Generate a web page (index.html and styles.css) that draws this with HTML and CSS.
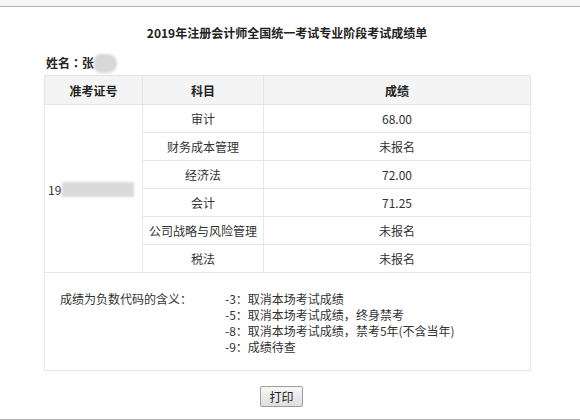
FILE: index.html
```html
<!DOCTYPE html>
<html lang="zh-CN">
<head>
<meta charset="utf-8">
<title>成绩单</title>
<link rel="stylesheet" href="styles.css">
</head>
<body>
<div class="topbar"></div>
<div class="page">
  <h1 class="title">2019年注册会计师全国统一考试专业阶段考试成绩单</h1>
  <div class="name">姓名<span class="punct">：</span>张<span class="blur-name"></span></div>
  <table class="scores">
    <colgroup>
      <col class="c1"><col class="c2"><col class="c3">
    </colgroup>
    <thead>
      <tr><th>准考证号</th><th>科目</th><th>成绩</th></tr>
    </thead>
    <tbody>
      <tr>
        <td rowspan="6" class="id"><span class="id-text">19</span><span class="blur-id"></span></td>
        <td>审计</td><td>68.00</td>
      </tr>
      <tr><td>财务成本管理</td><td>未报名</td></tr>
      <tr><td>经济法</td><td>72.00</td></tr>
      <tr><td>会计</td><td>71.25</td></tr>
      <tr><td>公司战略与风险管理</td><td>未报名</td></tr>
      <tr><td>税法</td><td>未报名</td></tr>
      <tr>
        <td colspan="3" class="notes">
          <div class="notes-inner">
            <div class="notes-label">成绩为负数代码的含义<span class="punct">：</span></div>
            <div class="notes-list">
              <div>-3<span class="punct">：</span>取消本场考试成绩</div>
              <div>-5<span class="punct">：</span>取消本场考试成绩<span class="punct">，</span>终身禁考</div>
              <div>-8<span class="punct">：</span>取消本场考试成绩<span class="punct">，</span>禁考5年(不含当年)</div>
              <div>-9<span class="punct">：</span>成绩待查</div>
            </div>
          </div>
        </td>
      </tr>
    </tbody>
  </table>
  <div class="actions"><button class="print">打印</button></div>
</div>
<div class="bottombar"></div>
</body>
</html>
```

FILE: styles.css
```css
* { box-sizing: border-box; }
html, body {
  margin: 0;
  padding: 0;
  background: #ffffff;
  font-family: "Noto Sans CJK SC", "Microsoft YaHei", sans-serif;
  font-size: 12px;
  color: #333333;
}
.punct {
  font-family: "Noto Sans CJK TC", "Noto Sans CJK SC", sans-serif;
}
.topbar {
  height: 7px;
  background: #f6f6f6;
  border-bottom: 1px solid #b3b3b3;
}
.page {
  width: 486px;
  margin-left: 44px;
}
.title {
  margin: 0;
  padding-top: 16px;
  line-height: 20px;
  font-size: 12px;
  font-weight: bold;
  text-align: center;
  color: #222222;
}
.name {
  margin-top: 10px;
  height: 20px;
  line-height: 20px;
  font-weight: bold;
  color: #222222;
  padding-left: 2px;
  display: flex;
  align-items: center;
}
.blur-name {
  display: inline-block;
  width: 23px;
  height: 19px;
  background: #d8d8d8;
  border-radius: 6px 9px 9px 6px;
  filter: blur(1px);
}
.scores {
  margin-top: 2px;
  width: 486px;
  border-collapse: collapse;
  table-layout: fixed;
  border: 1px solid #e4e4e4;
}
.c1 { width: 98px; }
.c2 { width: 121px; }
.c3 { width: 267px; }
.scores th {
  height: 29px;
  background: #f4f4f4;
  font-weight: bold;
  color: #222222;
  border: 1px solid #e4e4e4;
  padding: 0;
}
.scores td {
  height: 28px;
  text-align: center;
  border: 1px solid #e6e6e6;
  padding: 0;
  color: #333333;
}
.scores td.id {
  text-align: left;
  padding-left: 3px;
  vertical-align: middle;
}
.id-text {
  vertical-align: middle;
}
.blur-id {
  display: inline-block;
  vertical-align: middle;
  width: 72px;
  height: 15px;
  margin-left: 1px;
  background: #d9d9d9;
  filter: blur(0.8px);
}
.scores td.notes {
  height: 98px;
  text-align: left;
  vertical-align: top;
  padding: 18px 0 0 15px;
}
.notes-inner {
  display: flex;
  line-height: 16px;
}
.notes-label {
  width: 165px;
  flex: none;
}
.actions {
  text-align: center;
  padding-right: 11px;
  margin-top: 15px;
}
.print {
  width: 43px;
  height: 21px;
  padding: 0;
  font-family: "Noto Sans CJK SC", sans-serif;
  font-size: 12px;
  color: #222222;
  background: linear-gradient(#f7f7f7, #dedede);
  border: 1px solid #9e9e9e;
  border-radius: 2px;
}
.bottombar {
  margin-top: 12px;
  border-top: 1px solid #b3b3b3;
  height: 1px;
  background: #f0f0f0;
}
```
